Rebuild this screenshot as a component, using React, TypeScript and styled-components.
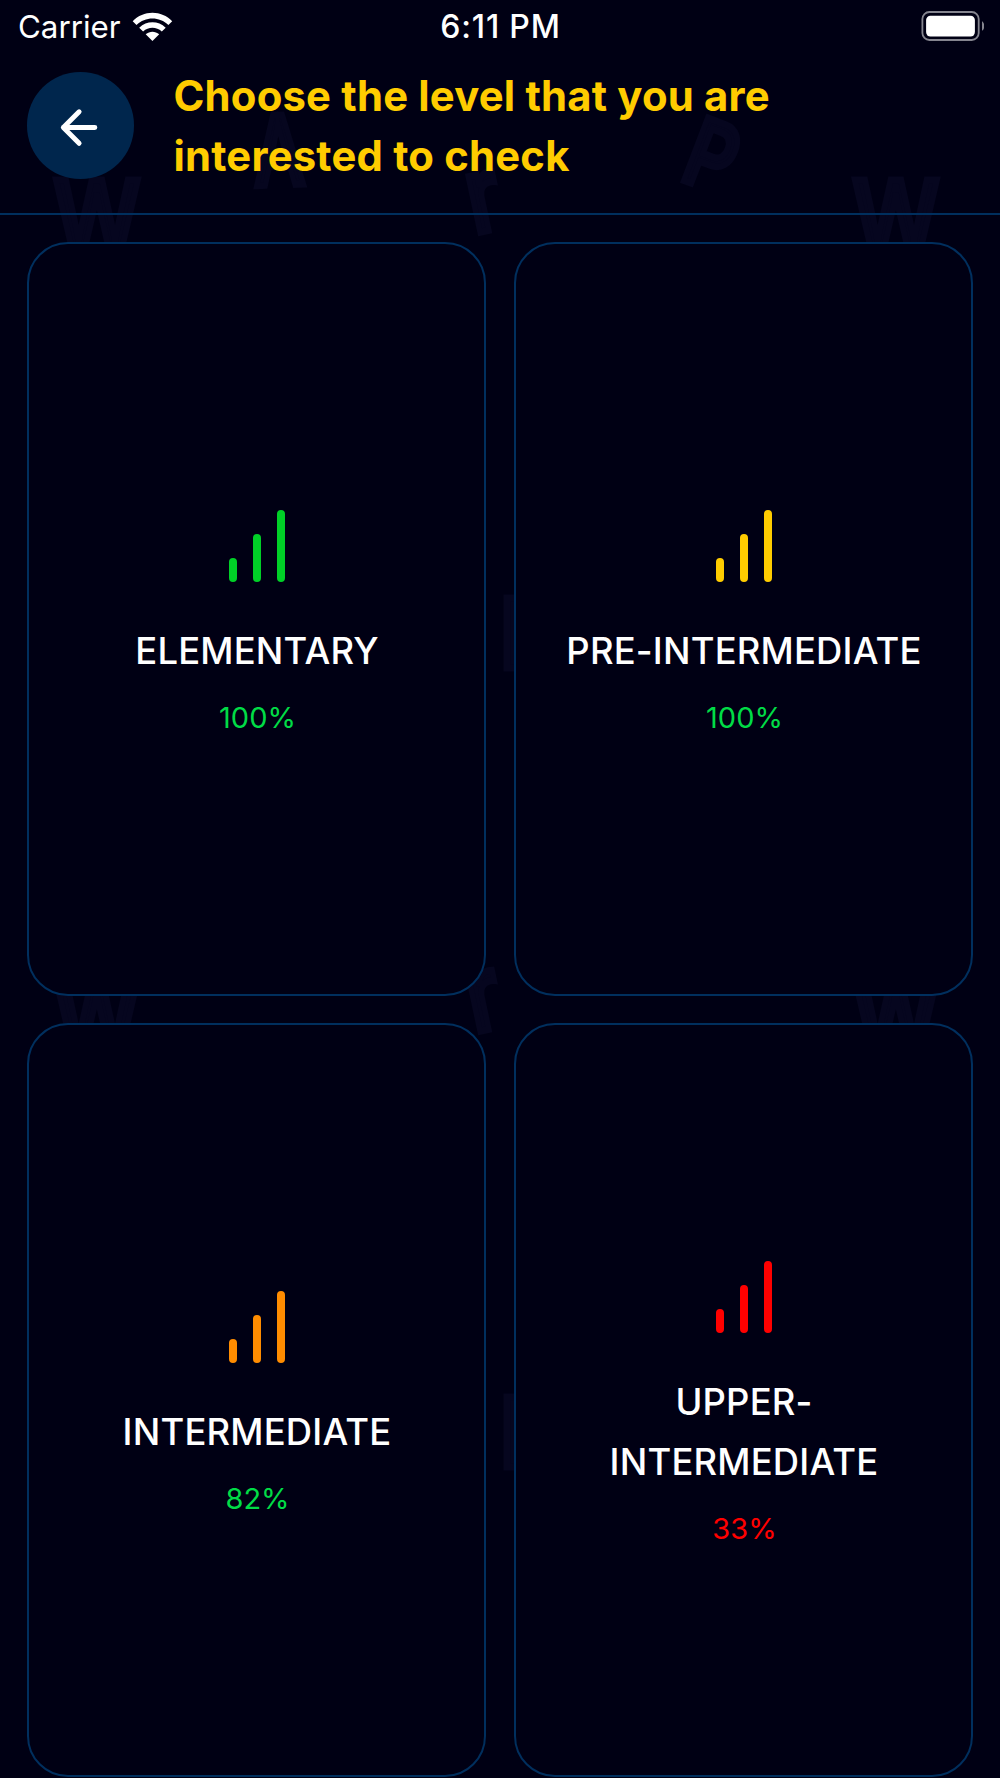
import React from "react";
import styled, { createGlobalStyle } from "styled-components";

const colors = {
  background: "#000014",
  letter: "#06061f",
  border: "#002f5e",
  button: "#00264d",
  accent: "#ffcc00",
  green: "#00d027",
  greenText: "#00dc46",
  orange: "#ff8c00",
  red: "#ff0000",
};

const GlobalStyle = createGlobalStyle`
  *, *::before, *::after { box-sizing: border-box; }
  body {
    margin: 0;
    background: ${colors.background};
    font-family: Inter, "Liberation Sans", sans-serif;
    color: #fff;
  }
`;

const Screen = styled.div`
  position: relative;
  width: 1000px;
  height: 1778px;
  overflow: hidden;
  display: flex;
  flex-direction: column;
  background: ${colors.background};
  isolation: isolate;
`;

const Pattern = styled.div`
  position: absolute;
  inset: 0;
  z-index: -1;
`;

const Letter = styled.span<{ $x: number; $y: number; $size: number; $turn: number; $squeeze: number }>`
  position: absolute;
  left: ${(p) => p.$x}px;
  top: ${(p) => p.$y}px;
  transform: translate(-50%, -50%) rotate(${(p) => p.$turn}deg) scaleX(${(p) => p.$squeeze});
  font-size: ${(p) => p.$size}px;
  font-weight: 500;
  line-height: 1;
  color: ${colors.letter};
  -webkit-text-stroke: 7px ${colors.letter};
  stroke-linejoin: round;
`;

const StatusBar = styled.div`
  display: grid;
  flex-shrink: 0;
  grid-template-columns: 1fr auto 1fr;
  align-items: center;
  height: 54px;
  padding: 0 16px 0 17px;
`;

const CarrierGroup = styled.div`
  display: flex;
  align-items: center;
  gap: 11px;
`;

const Carrier = styled.span`
  padding-left: 1px;
  font-size: 31.3px;
  line-height: 54px;
`;

const Clock = styled.span`
  font-size: 32px;
  font-weight: 500;
  letter-spacing: 0.8px;
  line-height: 54px;
`;

const BatterySlot = styled.div`
  display: flex;
  justify-content: flex-end;
  margin-top: -3px;
`;

const Header = styled.header`
  display: flex;
  flex-shrink: 0;
  align-items: center;
  height: 161px;
  padding: 0 27px 15px;
  gap: 40px;
  border-bottom: 2px solid ${colors.border};
`;

const BackButton = styled.button`
  display: grid;
  place-items: center;
  width: 106.5px;
  height: 106.5px;
  margin-top: -1px;
  padding: 0;
  border: 0;
  border-radius: 50%;
  background: ${colors.button};
`;

const Title = styled.h1`
  margin: 0;
  font-size: 41.8px;
  font-weight: 700;
  line-height: 60px;
  letter-spacing: 0.2px;
  color: ${colors.accent};
`;

const Grid = styled.main`
  display: grid;
  flex-shrink: 0;
  grid-template-columns: 459px 459px;
  grid-auto-rows: 754px;
  gap: 27px 28px;
  padding: 27px 27px 0;
`;

const Card = styled.section`
  display: flex;
  flex-direction: column;
  align-items: center;
  justify-content: center;
  border: 2px solid ${colors.border};
  border-radius: 41px;
  background: ${colors.background};
`;

const Level = styled.h2`
  margin: 27px 0 14px;
  padding-left: 1px;
  font-size: 36.4px;
  font-weight: 500;
  line-height: 60px;
  letter-spacing: 0.2px;
  text-align: center;
`;

const Percent = styled.span<{ $color: string }>`
  margin-left: 2px;
  font-size: 29px;
  font-weight: 400;
  line-height: 46px;
  color: ${(p) => p.$color};
`;

const letters = [
  { char: "W", x: 97, y: 217, size: 100, turn: 0, squeeze: 0.86 },
  { char: "W", x: 896, y: 217, size: 100, turn: 0, squeeze: 0.86 },
  { char: "A", x: 279, y: 150, size: 96, turn: -2, squeeze: 0.74 },
  { char: "P", x: 712, y: 156, size: 92, turn: 21, squeeze: 0.8 },
  { char: "r", x: 482, y: 193, size: 104, turn: -12, squeeze: 0.8 },
  { char: "W", x: 97, y: 1016, size: 100, turn: 0, squeeze: 0.86 },
  { char: "W", x: 896, y: 1016, size: 100, turn: 0, squeeze: 0.86 },
  { char: "r", x: 482, y: 992, size: 104, turn: -12, squeeze: 0.8 },
  { char: "D", x: 534, y: 633, size: 96, turn: 0, squeeze: 1 },
  { char: "D", x: 534, y: 1432, size: 96, turn: 0, squeeze: 1 },
];

const levels = [
  { lines: ["ELEMENTARY"], color: colors.green, percent: 100, percentColor: colors.greenText },
  { lines: ["PRE-INTERMEDIATE"], color: colors.accent, percent: 100, percentColor: colors.greenText },
  { lines: ["INTERMEDIATE"], color: colors.orange, percent: 82, percentColor: colors.greenText },
  { lines: ["UPPER-", "INTERMEDIATE"], color: colors.red, percent: 33, percentColor: colors.red },
];

const WifiIcon = () => (
  <svg width="41" height="30" viewBox="0 0 41 30" fill="#fff">
    <path d="M.7 9.2C11.2-2.2 29.7-2.2 40.2 9.2L36.4 13C27.7 4.2 13.2 4.2 4.5 13Z" />
    <path d="M7.2 15.7C14.7 8.4 26.2 8.4 33.7 15.7L29.8 19.5C24.4 14.6 16.5 14.6 11.1 19.5Z" />
    <path d="M13.7 22.2C17.8 18.8 23.1 18.8 27.2 22.2L20.45 29Z" />
  </svg>
);

const BatteryIcon = () => (
  <svg width="63" height="30" viewBox="0 0 63 30" fill="none">
    <rect x="1.4" y="1" width="56.3" height="28" rx="7" stroke="#85858f" strokeWidth="1.8" />
    <rect x="5.1" y="4.8" width="48.8" height="20.6" rx="4.3" fill="#fff" />
    <path d="M61 10.2C64 12 64 18 61 19.8Z" fill="#85858f" />
  </svg>
);

const ArrowIcon = () => (
  <svg width="54" height="54" viewBox="0 0 24 24" fill="none" stroke="#fff" strokeWidth="2.2" strokeLinecap="round" strokeLinejoin="round">
    <path d="M18.6 12.7H4.6M11.6 19.7L4.6 12.7L11.6 5.7" />
  </svg>
);

const BarsIcon = ({ color }: { color: string }) => (
  <svg width="96" height="96" viewBox="0 0 24 24" fill="none" stroke={color} strokeWidth="2" strokeLinecap="round">
    <path d="M6 20V16M12 20V10M18 20V4" />
  </svg>
);

export default function App() {
  return (
    <>
      <GlobalStyle />
      <Screen>
        <Pattern aria-hidden="true">
          {letters.map((l, i) => (
            <Letter key={i} $x={l.x} $y={l.y} $size={l.size} $turn={l.turn} $squeeze={l.squeeze}>
              {l.char}
            </Letter>
          ))}
        </Pattern>
        <StatusBar>
          <CarrierGroup>
            <Carrier>Carrier</Carrier>
            <WifiIcon />
          </CarrierGroup>
          <Clock>6:11 PM</Clock>
          <BatterySlot>
            <BatteryIcon />
          </BatterySlot>
        </StatusBar>
        <Header>
          <BackButton aria-label="Back">
            <ArrowIcon />
          </BackButton>
          <Title>
            Choose the level that you are
            <br />
            interested to check
          </Title>
        </Header>
        <Grid>
          {levels.map((level) => (
            <Card key={level.lines.join("")}>
              <BarsIcon color={level.color} />
              <Level>
                {level.lines.map((line, i) => (
                  <React.Fragment key={line}>
                    {i > 0 && <br />}
                    {line}
                  </React.Fragment>
                ))}
              </Level>
              <Percent $color={level.percentColor}>{level.percent}%</Percent>
            </Card>
          ))}
        </Grid>
      </Screen>
    </>
  );
}
